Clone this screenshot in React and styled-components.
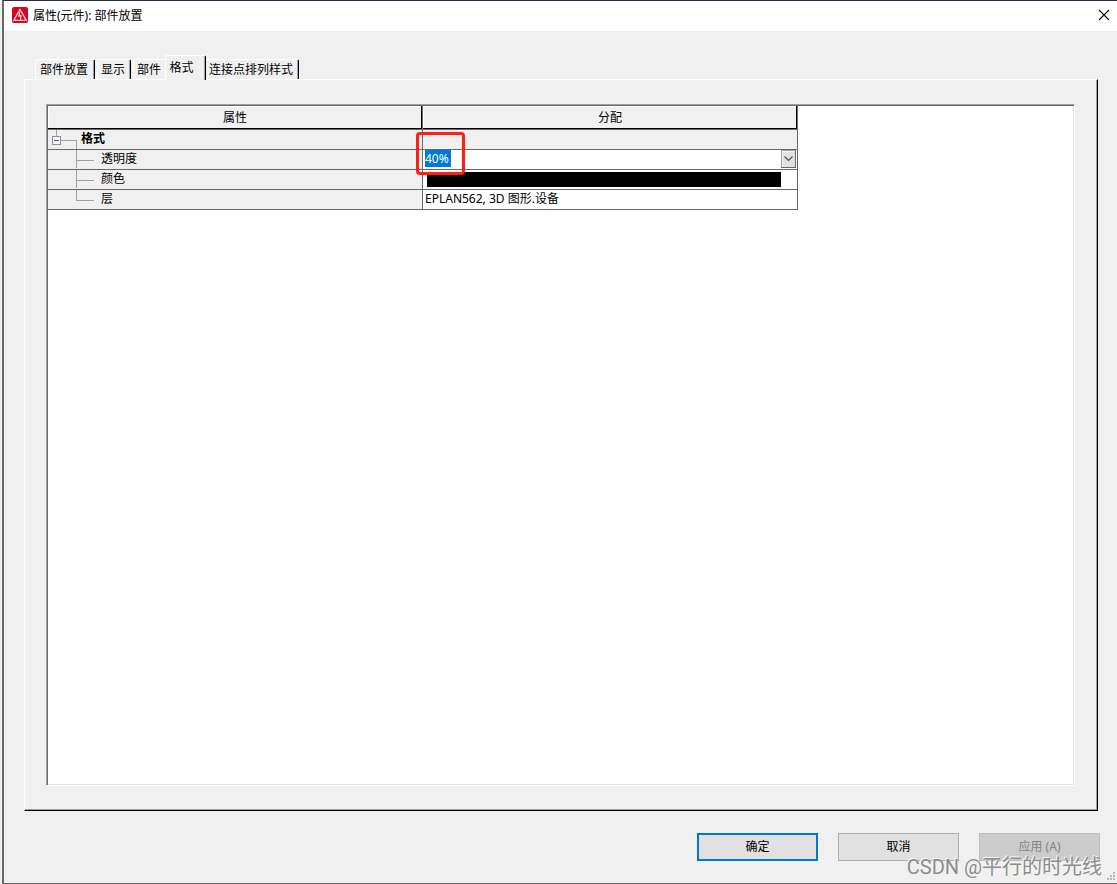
import { useState } from "react";
import styled, { createGlobalStyle } from "styled-components";

const GlobalStyle = createGlobalStyle`
  * {
    box-sizing: border-box;
  }

  body {
    margin: 0;
    background: #f0f0f0;
  }

  body, button, select {
    font-family: "Noto Sans", "Noto Sans CJK SC", sans-serif;
    font-size: 12px;
    line-height: 16px;
    color: #000;
  }
`;

const Dialog = styled.div`
  position: relative;
  display: flex;
  flex-direction: column;
  min-height: 100vh;
  margin-left: 2px;
  border-top: 1px solid #1f3055;
  border-left: 2px solid #696969;
  border-bottom: 1px solid #696969;
  background: #f0f0f0;
`;

const TitleBar = styled.header`
  display: flex;
  align-items: center;
  gap: 5px;
  height: 30px;
  padding: 0 7px 2px 8px;
  background: #fff;
`;

const Title = styled.h1`
  flex: 1;
  margin: 0;
  padding-top: 2px;
  font-size: 12px;
  font-weight: 400;
`;

const CloseButton = styled.button`
  display: flex;
  padding: 0;
  border: 0;
  background: none;
`;

const Content = styled.main`
  flex: 1;
  display: flex;
  flex-direction: column;
  padding: 24px 19px 22px 20px;
`;

const TabList = styled.div`
  display: flex;
  align-items: flex-end;
  gap: 2px;
  height: 24px;
  padding-left: 11px;
`;

const Tab = styled.button`
  position: relative;
  z-index: ${({ $active }) => ($active ? 1 : 0)};
  flex: none;
  width: ${({ $width }) => $width}px;
  height: ${({ $active }) => ($active ? 25 : 20)}px;
  margin: 0 0 ${({ $active }) => ($active ? -1 : 0)}px ${({ $overlap }) => -$overlap}px;
  padding: ${({ $active }) => ($active ? "0 8px 0 0" : "0 2px 0 0")};
  border: 1px solid #fff;
  border-right-color: #000;
  border-bottom: 0;
  border-radius: 2px 2px 0 0;
  background: #f0f0f0;
  box-shadow: inset -1px 0 #a0a0a0;
  white-space: nowrap;
`;

const Panel = styled.section`
  flex: 1;
  display: flex;
  padding: 24px 22px 24px 21px;
  border: 1px solid #fff;
  border-right-color: #000;
  border-bottom-color: #000;
  box-shadow: inset -1px -1px #a0a0a0;
`;

const ListBox = styled.div`
  flex: 1;
  border: 1px solid;
  border-color: #a0a0a0 #fff #fff #a0a0a0;
  background: #fff;
  box-shadow: inset 1px 1px #696969, inset -1px -1px #e3e3e3;
  padding: 1px;
`;

const Table = styled.table`
  width: 750px;
  table-layout: fixed;
  border-collapse: separate;
  border-spacing: 0;
`;

const HeadCell = styled.th`
  height: 24px;
  padding: 0;
  border-right: 1px solid #696969;
  border-bottom: 1px solid #696969;
  background: #f0f0f0;
  box-shadow: inset -1px -1px #000, inset 1px 1px #fff;
  font-weight: 400;
`;

const Cell = styled.td`
  position: relative;
  height: 20px;
  padding: 0 0 0 2px;
  border-right: 1px solid #696969;
  border-bottom: 1px solid #696969;
  background: ${({ $group }) => ($group ? "#f0f0f0" : "#fff")};
  line-height: 17px;
  vertical-align: top;
`;

const NameCell = styled.th`
  height: 20px;
  padding: 0;
  border-right: 1px solid #696969;
  border-bottom: 1px solid #696969;
  background: #f0f0f0;
  font-weight: ${({ $group }) => ($group ? 700 : 400)};
  text-align: left;
`;

const NameRow = styled.div`
  display: flex;
  align-items: flex-start;
  gap: 4px;
  height: 19px;
  line-height: 17px;
`;

const Combo = styled.div`
  display: flex;
  height: 19px;
  padding-right: 1px;
`;

const Select = styled.select`
  flex: 1;
  height: 17px;
  padding: 0;
  border: 0;
  outline: 0;
  appearance: none;
  color: #fff;
  background: linear-gradient(#0078d7, #0078d7) 0 0 / 26px 17px no-repeat;

  option {
    color: #000;
  }
`;

const Arrow = styled.span`
  display: flex;
  align-items: center;
  justify-content: center;
  width: 15px;
  height: 18px;
  border: 1px solid;
  border-color: #a0a0a0 #696969 #696969 #a0a0a0;
  background: #e1e1e1;
  box-shadow: inset 1px 1px #f5f5f5;
  pointer-events: none;
`;

const Swatch = styled.div`
  height: 15px;
  margin: 2px 16px 0 2px;
  background: #000;
`;

const Highlight = styled.span`
  position: absolute;
  z-index: 1;
  left: -7px;
  top: -18px;
  width: 49px;
  height: 43px;
  border: 3px solid #ff1f14;
  border-radius: 4px;
  pointer-events: none;
`;

const Footer = styled.footer`
  display: flex;
  justify-content: flex-end;
  gap: 20px;
  padding: 0 17px 22px 0;
`;

const Button = styled.button`
  width: 121px;
  height: 28px;
  padding: 0;
  border: ${({ $primary }) => ($primary ? "2px solid #0078d7" : "1px solid #adadad")};
  background: #e1e1e1;

  &:disabled {
    border-color: #bfbfbf;
    background: #ccc;
    color: #838383;
  }
`;

const Watermark = styled.span`
  position: absolute;
  right: 15px;
  bottom: 2px;
  color: #8c8c8c;
  font-family: Roboto, "Noto Sans CJK SC", sans-serif;
  font-size: 20px;
  line-height: 28px;
  text-shadow: -1px -1px #f8f8f8;
  white-space: nowrap;
  pointer-events: none;
`;

const Grip = styled.svg`
  position: absolute;
  right: 2px;
  bottom: 3px;
`;

const tabs = [
  { label: "部件放置", width: 60 },
  { label: "显示", width: 34 },
  { label: "部件", width: 34 },
  { label: "格式", width: 41, overlap: 4 },
  { label: "连接点排列样式", width: 94, overlap: 3 },
];

const Logo = () => (
  <svg width="16" height="16" viewBox="0 0 16 16">
    <rect width="16" height="16" rx="2" fill="#e2001a" />
    <path d="M8 2.3 14.2 13.3H1.8Z" fill="none" stroke="#fff" strokeWidth="1.1" />
    <path d="M8 5 6.6 9.4 9.2 8.4 8.4 12.6" fill="none" stroke="#fff" strokeWidth="1" />
  </svg>
);

const GroupBranch = () => (
  <svg width="29" height="19" shapeRendering="crispEdges">
    <path d="M8.5 0V6M13 10.5H28.5V19" fill="none" stroke="#a0a0a0" />
    <rect x="4.5" y="6.5" width="8" height="8" rx="1" fill="#f5f5f5" stroke="#919191" />
    <path d="M6 10.5H11" stroke="#3c5fb4" />
  </svg>
);

const Branch = ({ last }) => (
  <svg width="49" height="19" shapeRendering="crispEdges">
    <path d={last ? "M28.5 0V10.5H46" : "M28.5 0V18M28.5 10.5H46"} fill="none" stroke="#a0a0a0" />
  </svg>
);

const Name = ({ id, children, last }) => (
  <NameCell scope="row" id={id}>
    <NameRow>
      <Branch last={last} />
      {children}
    </NameRow>
  </NameCell>
);

const PropertyTable = () => {
  const [opacity, setOpacity] = useState("40%");

  return (
    <Table>
      <thead>
        <tr>
          <HeadCell scope="col">属性</HeadCell>
          <HeadCell scope="col">分配</HeadCell>
        </tr>
      </thead>
      <tbody>
        <tr>
          <NameCell scope="row" $group>
            <NameRow>
              <GroupBranch />
              格式
            </NameRow>
          </NameCell>
          <Cell $group />
        </tr>
        <tr>
          <Name id="opacity">透明度</Name>
          <Cell>
            <Combo>
              <Select
                aria-labelledby="opacity"
                value={opacity}
                onChange={(e) => setOpacity(e.target.value)}
              >
                <option>0%</option>
                <option>20%</option>
                <option>40%</option>
                <option>60%</option>
                <option>80%</option>
              </Select>
              <Arrow>
                <svg width="9" height="6" viewBox="0 0 9 6">
                  <path d="M.5.5 4.5 4.5 8.5.5" fill="none" stroke="#505050" strokeWidth="1.2" />
                </svg>
              </Arrow>
            </Combo>
            <Highlight />
          </Cell>
        </tr>
        <tr>
          <Name>颜色</Name>
          <Cell>
            <Swatch />
          </Cell>
        </tr>
        <tr>
          <Name last>层</Name>
          <Cell>EPLAN562, 3D 图形.设备</Cell>
        </tr>
      </tbody>
    </Table>
  );
};

export default function App() {
  const [active, setActive] = useState("格式");

  return (
    <>
      <GlobalStyle />
      <Dialog role="dialog" aria-labelledby="dialog-title">
        <TitleBar>
          <Logo />
          <Title id="dialog-title">属性(元件): 部件放置</Title>
          <CloseButton aria-label="关闭">
            <svg width="12" height="12" viewBox="0 0 12 12">
              <path d="M1 1 11 11M11 1 1 11" stroke="#000" strokeWidth="1.1" />
            </svg>
          </CloseButton>
        </TitleBar>
        <Content>
          <TabList role="tablist">
            {tabs.map(({ label, width, overlap = 0 }) => (
              <Tab
                key={label}
                role="tab"
                aria-selected={label === active}
                $active={label === active}
                $width={width}
                $overlap={overlap}
                onClick={() => setActive(label)}
              >
                {label}
              </Tab>
            ))}
          </TabList>
          <Panel role="tabpanel">
            <ListBox>
              <PropertyTable />
            </ListBox>
          </Panel>
        </Content>
        <Footer>
          <Button $primary>确定</Button>
          <Button>取消</Button>
          <Button disabled>应用 (A)</Button>
        </Footer>
        <Watermark>CSDN @平行的时光线</Watermark>
        <Grip width="8" height="8" fill="#b8b8b8" shapeRendering="crispEdges">
          <path d="M6 0h2v2h-2zM3 3h2v2h-2zM6 3h2v2h-2zM0 6h2v2h-2zM3 6h2v2h-2zM6 6h2v2h-2z" />
        </Grip>
      </Dialog>
    </>
  );
}
